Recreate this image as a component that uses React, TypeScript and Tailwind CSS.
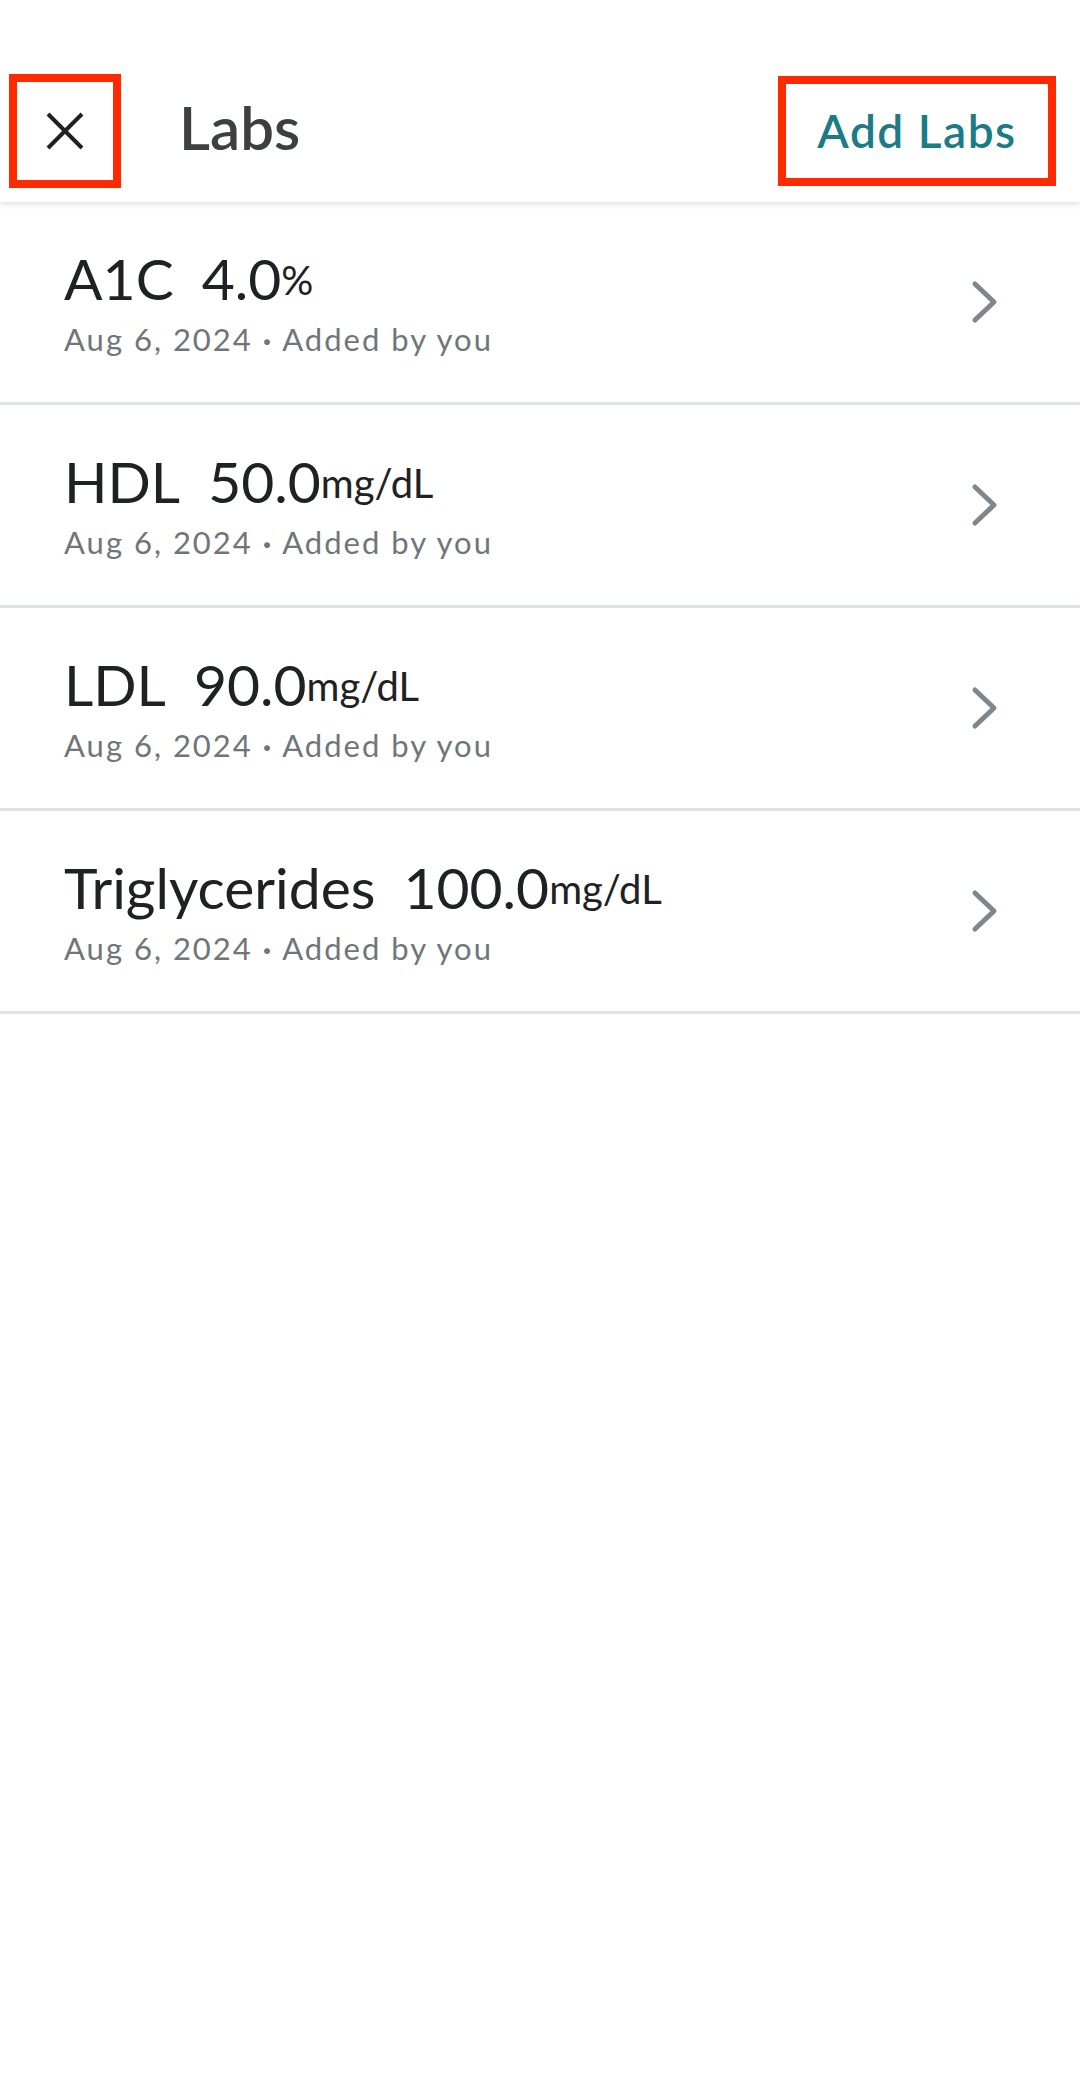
const labs = [
  { name: "A1C", value: "4.0", unit: "%" },
  { name: "HDL", value: "50.0", unit: "mg/dL" },
  { name: "LDL", value: "90.0", unit: "mg/dL" },
  { name: "Triglycerides", value: "100.0", unit: "mg/dL" },
];

function Chevron() {
  return (
    <svg width="30" height="46" viewBox="0 0 30 46" fill="none">
      <path d="M5 5 L24 23 L5 41" stroke="#80868b" strokeWidth="5" strokeLinecap="round" strokeLinejoin="round" />
    </svg>
  );
}

function LabRow({ name, value, unit }: { name: string; value: string; unit: string }) {
  return (
    <div className="h-[203px] flex items-center justify-between pl-[64px] pr-[80px] border-b-[3px] border-[#e0e2e4]">
      <div>
        <div className="text-[57px] leading-[64px] text-[#202124] whitespace-nowrap">
          {name}
          <span className="ml-[28px]">{value}</span>
          <span className="text-[40px] leading-none align-[5px]">{unit}</span>
        </div>
        <div className="mt-[9px] text-[31px] leading-[40px] tracking-[2px] text-[#70757a]">
          Aug 6, 2024 <span className="font-bold">·</span> Added by you
        </div>
      </div>
      <Chevron />
    </div>
  );
}

export default function App() {
  return (
    <div className="min-h-screen w-full bg-white font-['Lato','Liberation_Sans',sans-serif]">
      <header className="relative z-10 h-[202px] pt-[60px] flex items-center bg-white shadow-[0_3px_5px_rgba(0,0,0,0.10)]">
        <button className="ml-[9px] w-[112px] h-[114px] border-[8px] border-[#ff2a00] flex items-center justify-center">
          <svg width="40" height="40" viewBox="0 0 40 40" fill="none">
            <path d="M3 3 L37 37 M37 3 L3 37" stroke="#202124" strokeWidth="4" />
          </svg>
        </button>
        <h1 className="ml-[58px] mb-[8px] text-[60px] leading-none font-semibold text-[#3c4043]">Labs</h1>
        <button className="ml-auto mr-[24px] w-[278px] h-[110px] border-[8px] border-[#ff2a00] flex items-center justify-center text-[46px] leading-none font-semibold tracking-[1.5px] text-[#1b7c86]">
          Add Labs
        </button>
      </header>
      <main>
        {labs.map((l) => (
          <LabRow key={l.name} {...l} />
        ))}
      </main>
    </div>
  );
}
